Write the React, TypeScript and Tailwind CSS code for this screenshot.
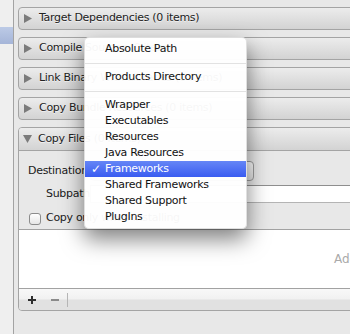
import React from "react";

const font = "font-['DejaVu_Sans',sans-serif]";

function TriRight() {
  return (
    <svg width="8" height="9" viewBox="0 0 8 9" className="shrink-0">
      <polygon points="0,0 8,4.5 0,9" fill="#7b7b7b" />
    </svg>
  );
}

function TriDown() {
  return (
    <svg width="9" height="8" viewBox="0 0 9 8" className="shrink-0">
      <polygon points="0,0 9,0 4.5,8" fill="#7b7b7b" />
    </svg>
  );
}

function Collapsed({ title }: { title: string }) {
  return (
    <div className="w-[420px] h-[23px] shrink-0 flex items-center border border-[#a4a4a4] rounded-[4px] bg-[linear-gradient(#ececec,#d3d3d3)]">
      <div className="ml-[5px]">
        <TriRight />
      </div>
      <span className="ml-[7px] text-[11px] tracking-[-0.3px] text-[#222] [text-shadow:0_1px_0_rgba(255,255,255,0.6)] whitespace-nowrap">
        {title}
      </span>
    </div>
  );
}

type Item = { label?: string; sep?: boolean; checked?: boolean };

const items: Item[] = [
  { label: "Absolute Path" },
  { sep: true },
  { label: "Products Directory" },
  { sep: true },
  { label: "Wrapper" },
  { label: "Executables" },
  { label: "Resources" },
  { label: "Java Resources" },
  { label: "Frameworks", checked: true },
  { label: "Shared Frameworks" },
  { label: "Shared Support" },
  { label: "PlugIns" },
];

export default function App() {
  return (
    <div className={`relative w-[350px] h-[334px] overflow-hidden flex ${font}`}>
      {/* left strip */}
      <div className="w-[14px] shrink-0 bg-[#efefef] border-r border-[#a3a3a3]">
        <div className="mt-[27px] h-[17px] bg-[linear-gradient(#bccae6,#a5b5d8)]" />
      </div>

      {/* main */}
      <div className="flex-1 bg-[#e8e8e8] pl-[4px] pt-[7px] flex flex-col gap-[7px] overflow-hidden">
        <Collapsed title="Target Dependencies (0 items)" />
        <Collapsed title="Compile Sources (0 items)" />
        <Collapsed title="Link Binary With Libraries (0 items)" />
        <Collapsed title="Copy Bundle Resources (0 items)" />

        {/* expanded Copy Files */}
        <div className="w-[420px] shrink-0 flex flex-col border border-[#a4a4a4] rounded-[4px] overflow-hidden bg-[#e8e8e8]">
          <div className="h-[23px] flex items-center border-b border-[#a4a4a4] bg-[linear-gradient(#ececec,#d3d3d3)]">
            <div className="ml-[4px]">
              <TriDown />
            </div>
            <span className="ml-[6px] text-[11px] tracking-[-0.3px] text-[#222] [text-shadow:0_1px_0_rgba(255,255,255,0.6)] whitespace-nowrap">
              Copy Files (0 items)
            </span>
          </div>

          {/* destination */}
          <div className="mt-[10px] h-[20px] flex items-center">
            <span className="w-[71px] pl-[9px] text-[11px] tracking-[-0.3px] text-[#1a1a1a] whitespace-nowrap">
              Destination
            </span>
            <div className="w-[164px] h-[20px] rounded-[4px] border border-[#9c9c9c] bg-[linear-gradient(#fdfdfd,#e2e2e2)] flex items-center pl-[14px] text-[11px] tracking-[-0.3px]">
              Frameworks
            </div>
          </div>

          {/* subpath */}
          <div className="mt-[4px] h-[18px] flex items-center">
            <span className="w-[71px] pl-[27px] text-[11px] tracking-[-0.3px] text-[#1a1a1a] whitespace-nowrap">
              Subpath
            </span>
            <div className="flex-1 h-[18px] bg-white border border-[#b4b4b4] border-t-[#8e8e8e]" />
          </div>

          {/* checkbox */}
          <div className="mt-[7px] h-[17px] flex items-center">
            <div className="ml-[10px] w-[12px] h-[12px] rounded-[3px] border border-[#8c8c8c] bg-[linear-gradient(#ffffff,#e6e6e6)]" />
            <span className="ml-[5px] text-[11px] tracking-[-0.3px] text-[#1a1a1a] whitespace-nowrap">
              Copy only when installing
            </span>
          </div>

          {/* table */}
          <div className="mt-[2px] h-[60px] border-y border-[#a2a2a2] bg-white flex items-center">
            <span className="ml-[315px] text-[12px] text-[#aaaaaa] whitespace-nowrap">
              Add files here
            </span>
          </div>

          {/* bottom bar */}
          <div className="h-[21px] flex items-center bg-[linear-gradient(#f8f8f8_0%,#f1f1f1_48%,#e1e1e1_52%,#e1e1e1_100%)]">
            <svg width="8" height="8" viewBox="0 0 8 8" className="ml-[9px]">
              <rect x="3" y="0" width="2" height="8" fill="#2e2e2e" />
              <rect x="0" y="3" width="8" height="2" fill="#2e2e2e" />
            </svg>
            <svg width="8" height="2" viewBox="0 0 8 2" className="ml-[15px]">
              <rect x="0" y="0" width="8" height="2" fill="#8a8a8a" />
            </svg>
            <div className="ml-[8px] w-px h-[14px] bg-[#b5b5b5]" />
          </div>
        </div>
      </div>

      {/* popup menu */}
      <div className="absolute left-[84px] top-[37px] w-[163px] h-[192px] rounded-[5px] bg-[rgba(255,255,255,0.96)] border border-[rgba(0,0,0,0.12)] shadow-[0_10px_22px_rgba(0,0,0,0.5)] py-[3px] flex flex-col">
        {items.map((it, i) =>
          it.sep ? (
            <div key={i} className="h-[12px] flex items-center">
              <div className="w-full h-px bg-[#e2e2e2]" />
            </div>
          ) : (
            <div
              key={i}
              className={
                it.checked
                  ? "h-[16px] flex items-center bg-[linear-gradient(#6586f6,#3a5cf1)] text-white"
                  : "h-[16px] flex items-center text-[#111]"
              }
            >
              <span className="w-[20px] pl-[6px] text-[12px]">{it.checked ? "✓" : ""}</span>
              <span className="text-[11px] tracking-[-0.3px] whitespace-nowrap">{it.label}</span>
            </div>
          )
        )}
      </div>
    </div>
  );
}
